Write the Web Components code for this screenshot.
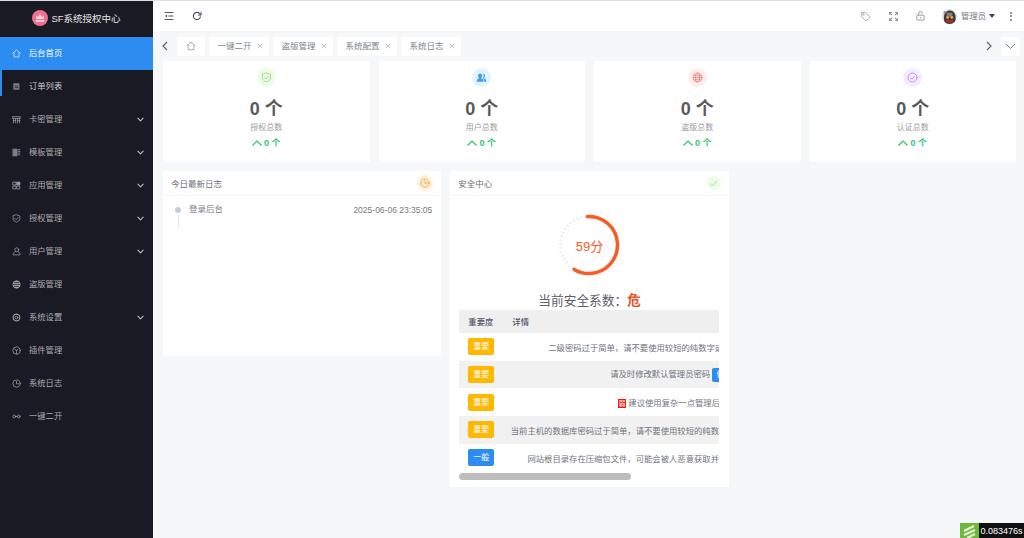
<!DOCTYPE html>
<html lang="zh"><head><meta charset="utf-8"><title>SF系统授权中心</title>
<style>
html,body{margin:0;height:100%;overflow:hidden}
body{font-family:"Liberation Sans","Noto Sans CJK SC",sans-serif;background:#f5f7f9;color:#515a6e}
</style></head><body>
<sf-app>
  <sf-sidebar slot="side">
    <sf-nav icon="home" active>后台首页</sf-nav>
    <sf-nav icon="order" marked>订单列表</sf-nav>
    <sf-nav icon="card" arrow>卡密管理</sf-nav>
    <sf-nav icon="tpl" arrow>模板管理</sf-nav>
    <sf-nav icon="apps" arrow>应用管理</sf-nav>
    <sf-nav icon="shield" arrow>授权管理</sf-nav>
    <sf-nav icon="user" arrow>用户管理</sf-nav>
    <sf-nav icon="globe">盗版管理</sf-nav>
    <sf-nav icon="gear" arrow>系统设置</sf-nav>
    <sf-nav icon="plug">插件管理</sf-nav>
    <sf-nav icon="clock">系统日志</sf-nav>
    <sf-nav icon="link">一键二开</sf-nav>
  </sf-sidebar>
  <sf-header slot="head"></sf-header>
  <sf-tabs slot="tabs">
    <sf-tab home></sf-tab>
    <sf-tab>一键二开</sf-tab>
    <sf-tab>盗版管理</sf-tab>
    <sf-tab>系统配置</sf-tab>
    <sf-tab>系统日志</sf-tab>
  </sf-tabs>
  <sf-stats slot="stats">
    <sf-stat icon="shield" color="#7ed05a" tint="#effbe8" label="授权总数"></sf-stat>
    <sf-stat icon="users" color="#3e9df5" tint="#e3f3fe" label="用户总数"></sf-stat>
    <sf-stat icon="web" color="#f4736f" tint="#feeeec" label="盗版总数"></sf-stat>
    <sf-stat icon="check" color="#a670ee" tint="#f4ebfe" label="认证总数"></sf-stat>
  </sf-stats>
  <sf-row slot="row">
    <sf-panel heading="今日最新日志" kind="clock" style="height:185px">
      <sf-log time="2025-06-06 23:35:05">登录后台</sf-log>
    </sf-panel>
    <sf-panel heading="安全中心" kind="ok" style="height:316px">
      <sf-gauge value="59"></sf-gauge>
      <sf-risk></sf-risk>
    </sf-panel>
  </sf-row>
  <sf-timer slot="timer">0.083476s</sf-timer>
</sf-app>
<script>
const I={
home:'<path d="M1.500 7.500 8 1.800l6.500 5.700M3.500 6.500V14h9V6.500"/>',
order:'<path d="M3.500 3h9v10h-9z" fill="currentColor" opacity=".75"/><path d="M5.500 7h5M5.500 10h5" stroke="#191a23"/>',
card:'<path d="M1.500 3h13v3h-13zM2.500 6v8M6.500 6v8M10 6v8M13.500 6v8M2.500 10h4M10 10h4"/>',
tpl:'<path d="M2 2h7v12H2z" fill="currentColor" opacity=".75"/><path d="M11 3h3M11 6h3M11 9h3M11 12h3"/>',
apps:'<path d="M2 2h5v5H2zM2 9h5v5H2zM9 9h5v5H9z"/><path d="M9 2h5v5H9z" fill="currentColor"/>',
shield:'<path d="M8 1.500 14 3.500v5c0 3-3 5-6 6-3-1-6-3-6-6v-5z"/><path d="m5 8 2.200 2.200L11 6.200"/>',
user:'<circle cx="8.500" cy="5" r="3.500"/><path d="M6 8 2 11.500V14h12v-2.500L11 8"/>',
globe:'<circle cx="8" cy="8" r="6.500" fill="currentColor"/><path d="M1.500 8h13M4 4.500h8M4 11.500h8" stroke="#191a23"/>',
gear:'<circle cx="8" cy="8" r="2.500"/><circle cx="8" cy="8" r="6" stroke-dasharray="3 1.500" stroke-width="2"/>',
plug:'<circle cx="8" cy="8" r="6.500"/><path d="M5 5.500 8 8l3-2.500M8 8v6"/>',
clock:'<circle cx="8" cy="8" r="6.500"/><path d="M8 4v4.500h3.500"/>',
link:'<circle cx="4" cy="8" r="2.500"/><circle cx="12" cy="8" r="2.500"/><path d="M6 8h4"/>',
users:'<path d="M1 14c0-3 2-4.500 3.500-5C3.500 8 3 6.800 3 5.500 3 3.500 4.200 2 6 2s3 1.500 3 3.500c0 1.300-.5 2.500-1.500 3.500 1.500.5 3.500 2 3.500 5z" fill="currentColor" stroke="none"/><path d="M10.500 2.200c1.500.2 2.500 1.600 2.500 3.300 0 1.300-.5 2.500-1.500 3.500 1.500.5 3.500 2 3.500 5h-3c0-2-1-3.500-2.200-4.600.9-1.100 1.200-2.500 1.200-3.900 0-1.200-.2-2.300-.5-3.300z" fill="currentColor" stroke="none"/>',
web:'<circle cx="8" cy="8" r="6.500"/><ellipse cx="8" cy="8" rx="3" ry="6.500"/><path d="M1.500 8h13M2.500 4.800h11M2.500 11.200h11"/>',
check:'<circle cx="8" cy="8" r="6.500"/><path d="m4.800 8 2.300 2.300 4.200-4.300"/>',
ok:'<path d="m2 8.500 4 4L14 4"/>'
};
const svg=(n,s,sw=1.300)=>`<svg width="${s}" height="${s}" viewBox="0 0 16 16" fill="none" stroke="currentColor" stroke-width="${sw}" stroke-linecap="round" stroke-linejoin="round" style="display:block">${I[n]}</svg>`;
function def(name,render){customElements.define(name,class extends HTMLElement{
  constructor(){super();this.attachShadow({mode:'open'})}
  connectedCallback(){this.shadowRoot.innerHTML=render(this)}
})}
const chevDown=(s,c='currentColor')=>`<svg width="${s}" height="${s}" viewBox="0 0 16 16" fill="none" stroke="${c}" stroke-width="2.600" stroke-linecap="round" stroke-linejoin="round" style="display:block"><path d="m2 5 6 6 6-6"/></svg>`;

def('sf-app',()=>`<style>
:host{display:grid;grid-template-columns:153px 1fr;grid-template-rows:30px 30px 1fr;height:538px;box-sizing:border-box;border-top:1px solid #dfe0e2;position:relative;overflow:hidden}
.s{display:block;grid-row:1/4}.c{display:flex;flex-direction:column;gap:9px;padding:0 8px 0 10px;min-width:0}
</style><div class="s"><slot name="side"></slot></div><slot name="head"></slot><slot name="tabs"></slot>
<div class="c"><slot name="stats"></slot><slot name="row"></slot></div><slot name="timer"></slot>`);

def('sf-sidebar',()=>`<style>
:host{display:flex;flex-direction:column;width:153px;height:537px;background:#191a23}
.logo{height:36px;display:flex;align-items:center;justify-content:center;gap:3px;color:#e6e6e8;font-size:9.500px;box-sizing:border-box;border-bottom:1px solid #10131c;padding-bottom:1px}
</style><div class="logo"><svg width="16" height="16" viewBox="0 0 16 16"><circle cx="8" cy="8" r="8" fill="#ee6f8f"/><path d="M8 3.500 10 7l2-1.500-.3 3.500H4.300L4 5.500 6 7z" fill="#fbd5de"/><path d="M3 10h10l-1.500 2h-7z" fill="#f9c5d2"/></svg><span>SF系统授权中心</span></div><slot></slot>`);

def('sf-nav',el=>{const a=el.hasAttribute('active'),m=el.hasAttribute('marked');return `<style>
:host{display:flex;align-items:center;height:33px;box-sizing:border-box;padding:0 9px 0 12px;font-size:8.300px;color:${a?'#fff':m?'#c9cacd':'#a9abb1'};background:${a?'#2d8cf0':'transparent'};position:relative}
.t{margin-left:8px;flex:1;position:relative;top:-1.500px}.i{color:${a?'#e6f1fd':'#a0a2a9'};position:relative;top:-.5px}
.mark{position:absolute;left:0;top:0;width:2px;height:26px;background:#2d8cf0}
</style>${m?'<span class="mark"></span>':''}<span class="i">${svg(el.getAttribute('icon'),9)}</span><span class="t"><slot></slot></span>${el.hasAttribute('arrow')?chevDown(7,'#b8bac0'):''}`});

def('sf-header',()=>`<style>
:host{display:flex;align-items:center;height:30px;background:#fff;padding:0 12px 0 11px;color:#55596a;font-size:8.300px}
.g{width:10px;color:#4d5160}.r{margin-left:18px}.mr{margin-left:auto;color:#9a9ea8}.x{margin-left:17px;color:#9a9ea8}
.who{display:flex;align-items:center;margin-left:17px;color:#75787f}
.who span{margin-left:4px;position:relative;top:-1px}
.caret{width:0;height:0;border:3.500px solid transparent;border-top:4px solid #3c4256;border-bottom:0;margin-left:3px}
.dots{margin-left:15px;display:flex;flex-direction:column;gap:1.500px}
.dots i{width:2px;height:2px;border-radius:50%;background:#6c707c;display:block}
</style>
<div class="g"><svg width="10" height="10" viewBox="0 0 16 16" fill="none" stroke="currentColor" stroke-width="1.600" style="display:block"><path d="M1 2.500h14M7 8h8M1 13.500h14"/><path d="M5 5.500 1.500 8 5 10.500z" fill="currentColor" stroke="none"/></svg></div>
<div class="g r"><svg width="10" height="10" viewBox="0 0 16 16" fill="none" stroke="currentColor" stroke-width="1.800" stroke-linecap="round" style="display:block"><path d="M13.500 9.500A5.800 5.800 0 1 1 12 3.800L14 6"/><path d="M14.500 1.800V6.500H10" stroke-width="1.500"/></svg></div>
<div class="g mr" style="color:#9a9ea8;width:11px"><svg width="11" height="11" viewBox="0 0 16 16" fill="none" stroke="currentColor" stroke-width="1.200" stroke-linejoin="round" style="display:block"><path d="M2 2h6l6.500 6.500-6 6L2 8z"/><circle cx="5" cy="5" r="1.200"/></svg></div>
<div class="g x" style="width:9px;margin-left:18px;color:#8b8f99"><svg width="9" height="9" viewBox="0 0 16 16" fill="none" stroke="currentColor" stroke-width="1.800" style="display:block"><path d="M1 5V1h4M15 5V1h-4M1 11v4h4M15 11v4h-4M1.500 1.500l4 4M14.500 1.500l-4 4M1.500 14.500l4-4M14.500 14.500l-4-4"/></svg></div>
<div class="g x" style="width:9px;margin-left:18px;color:#8b8f99"><svg width="9" height="10" viewBox="0 0 16 18" fill="none" stroke="currentColor" stroke-width="1.600" style="display:block"><rect x="1.500" y="7.500" width="13" height="9" rx="1"/><path d="M4.500 7.500V4.500a3.500 3.500 0 0 1 7 0"/><path d="M8 11v2.500"/></svg></div>
<div class="who"><svg width="15" height="15" viewBox="0 0 16 16"><defs><clipPath id="av"><circle cx="8" cy="8" r="8"/></clipPath></defs><g clip-path="url(#av)"><rect width="16" height="16" fill="#cfe4f2"/><path d="M2 10C2 4 5 1.500 8.500 1.500S15 5 14.500 10l-.5 6H3z" fill="#3b3a39"/><rect x="5" y="4" width="6" height="4" fill="#8a7f66"/><circle cx="6" cy="9" r="1.500" fill="#e8b04a"/><circle cx="10.500" cy="9" r="1.500" fill="#e8b04a"/><rect x="4" y="11.500" width="8" height="3" fill="#b32a22"/><circle cx="2.800" cy="3.500" r="1.500" fill="#d06aa0"/></g></svg><span>管理员</span><i class="caret"></i></div>
<div class="dots"><i></i><i></i><i></i></div>`);

def('sf-tabs',()=>`<style>
:host{display:flex;align-items:center;height:30px;padding:0 4px 0 0;box-sizing:border-box;color:#5f6470}
.a{width:24px;display:flex;justify-content:center;flex:none}.list{display:flex;gap:3.500px;flex:1;min-width:0}
.d{width:19px;height:19px;background:#fff;border-radius:2px;display:flex;align-items:center;justify-content:center;color:#7f8490;margin-left:1px}
.n{width:23px;display:flex;justify-content:center;margin-left:auto}
</style>
<div class="a"><svg width="8" height="10" viewBox="0 0 8 10" fill="none" stroke="currentColor" stroke-width="1.200"><path d="M6 1 2 5l4 4"/></svg></div>
<div class="list"><slot></slot></div>
<div class="n"><svg width="8" height="10" viewBox="0 0 8 10" fill="none" stroke="currentColor" stroke-width="1.200"><path d="m2 1 4 4-4 4"/></svg></div>
<div class="d"><svg width="11" height="7" viewBox="0 0 11 7" fill="none" stroke="currentColor" stroke-width="1"><path d="m1 1 4.500 4.500L10 1"/></svg></div>`);

def('sf-tab',el=>el.hasAttribute('home')?`<style>
:host{display:flex;width:28px;height:19px;background:#fff;border-radius:2px;align-items:center;justify-content:center;color:#7b7f88}
</style>${svg('home',10,1)}`:`<style>
:host{display:flex;align-items:center;height:19px;width:60.500px;box-sizing:border-box;padding-left:9px;background:#fff;border-radius:2px;color:#80848d;font-size:8.500px}
span{position:relative;top:-1px}svg{margin-left:5px}
</style><span><slot></slot></span><svg width="6" height="6" viewBox="0 0 6 6" stroke="#a9acb4" stroke-width=".8"><path d="m.8.8 4.400 4.400M5.200.8.800 5.200"/></svg>`);

def('sf-stats',()=>`<style>:host{display:grid;grid-template-columns:repeat(4,1fr);gap:9px}</style><slot></slot>`);
def('sf-stat',el=>`<style>
:host{display:flex;flex-direction:column;align-items:center;height:101px;box-sizing:border-box;padding-top:7px;background:#fff;border-radius:2px}
.c{width:19px;height:19px;border-radius:50%;background:${el.getAttribute('tint')};color:${el.getAttribute('color')};display:flex;align-items:center;justify-content:center}
.n{font-size:18px;font-weight:bold;color:#59595c;line-height:22px;margin-top:11px;white-space:nowrap}
.l{font-size:8px;color:#9a9ca3;line-height:12px;margin-top:2px}
.u{display:flex;align-items:center;gap:2px;color:#2fc56f;font-size:9px;font-weight:bold;line-height:12px;margin-top:3px}
</style><div class="c">${svg(el.getAttribute('icon'),11,1)}</div><div class="n">0 个</div><div class="l">${el.getAttribute('label')}</div>
<div class="u"><svg width="10" height="6" viewBox="0 0 10 6" fill="none" stroke="currentColor" stroke-width="1.200"><path d="m.5 5.500 4.500-4.500 4.500 4.500"/></svg><span>0 个</span></div>`);

def('sf-row',()=>`<style>:host{display:grid;grid-template-columns:repeat(3,1fr);gap:9px;align-items:start}</style><slot></slot>`);
def('sf-panel',el=>{const k=el.getAttribute('kind');
const badge=k==='clock'?`<span class="b" style="background:#fff1dd;box-shadow:0 0 3px #ffe3bd;color:#f8a63c">${svg('clock',10,1.500)}</span>`:`<span class="b" style="background:#effbe8;color:#7ed05a;margin-right:-1px">${svg('ok',9,1.200)}</span>`;
return `<style>
:host{display:block;box-sizing:border-box;background:#fff;border-radius:2px}
.h{display:flex;align-items:center;justify-content:space-between;height:25px;box-sizing:border-box;padding:0 9px 0 8px;border-bottom:1px solid #f6f6f7;font-size:8.500px;color:#6b6e75}
.b{width:14px;height:14px;border-radius:50%;display:flex;align-items:center;justify-content:center}
</style><div class="h"><span>${el.getAttribute('heading')}</span>${badge}</div><slot></slot>`});

def('sf-log',el=>`<style>
:host{display:flex;padding:10px 9px 0 12px;font-size:8.500px;color:#7b7e85;line-height:9px;justify-content:space-between}
.l{display:flex}.rail{width:6px;display:flex;flex-direction:column;align-items:center;margin-right:8px}
.dot{width:6px;height:6px;border-radius:50%;background:#c5cbdc;margin-top:1px}.line{width:1px;height:13px;background:#e8eaef;margin-top:2px}
.t{font-size:8.500px;color:#777a80}.x{position:relative;top:-1px}
</style><div class="l"><div class="rail"><i class="dot"></i><i class="line"></i></div><span class="x"><slot></slot></span></div><span class="t">${el.getAttribute('time')}</span>`);

def('sf-gauge',el=>{const v=+el.getAttribute('value');return `<style>
:host{display:flex;flex-direction:column;align-items:center;padding-top:18px}
.w{position:relative;width:62px;height:62px}
.v{position:absolute;left:0;right:0;top:0;bottom:0;display:flex;align-items:center;justify-content:center;color:#fb5a25;font-size:13px}
.s{font-size:12.700px;line-height:16px;color:#5d6067;margin-top:17px;white-space:nowrap}
b{color:#f6511d;font-weight:bold;font-size:13.500px}
</style><div class="w"><svg width="62" height="62" viewBox="0 0 62 62" fill="none" style="display:block;transform:rotate(-93deg)">
<circle cx="31" cy="31" r="28.500" stroke="#e2e2e2" stroke-width="3" stroke-dasharray="1 3"/>
<circle cx="31" cy="31" r="28.500" stroke="#fb5a25" stroke-width="3.500" stroke-linecap="round" pathLength="100" stroke-dasharray="${v+.5} 100"/>
</svg><div class="v">${v}分</div></div><div class="s">当前安全系数：<b>危</b></div>`});

def('sf-risk',()=>{
const rows=[
['重要','#ffb800','二级密码过于简单，请不要使用较短的纯数字或字母组合作为二级密码'],
['重要','#ffb800','请及时修改默认管理员密码 <i class="btn">修改</i>'],
['重要','#ffb800','<i class="weak">弱</i> 建议使用复杂一点管理后台地'],
['重要','#ffb800','当前主机的数据库密码过于简单，请不要使用较短的纯数字或字母组合作为数据库的连接码'],
['一般','#2d8cf0','网站根目录存在压缩包文件，可能会被人恶意获取并下载造成数据外泄风险请删除']];
return `<style>
:host{display:block;margin:1px 9px 0}
.v{overflow:hidden;width:260px}
.t{width:440px;font-size:8.330px;color:#70747c}
.r{display:flex;align-items:center;height:27.700px}
.r:nth-child(odd){background:#f1f1f2}.r.h{height:23px;background:#efeff0;color:#4f5565;font-weight:500}
.h span{position:relative;top:-1px}
.a{width:44px;flex:none;box-sizing:border-box;padding-left:9px}
.d{width:348px;flex:none;text-align:center;white-space:nowrap}
.h .d{text-align:left;padding-left:9px}
.tag{display:block;width:26px;height:17px;line-height:17px;text-align:center;border-radius:2px;color:#fff;font-size:8px;font-style:normal}
.btn{display:inline-block;font-style:normal;background:#2d8cf0;color:#fff;border-radius:2px;padding:0 4px;margin-right:8px;line-height:14px;font-size:8px}
.weak{display:inline-block;font-style:normal;background:#f01414;color:#fff;font-size:7px;line-height:9px;padding:0 0.500px;vertical-align:middle}
.bar{width:172px;height:7px;background:#bdbdbd;border-radius:4px;margin-top:2px}
</style><div class="v"><div class="t"><div class="r h"><span class="a">重要度</span><span class="d">详情</span></div>${rows.map(r=>`<div class="r"><span class="a"><i class="tag" style="background:${r[1]}">${r[0]}</i></span><span class="d">${r[2]}</span></div>`).join('')}</div></div><div class="bar"></div>`});

def('sf-timer',()=>`<style>
:host{position:absolute;right:0;bottom:0;display:flex;height:15px;align-items:stretch;font-size:9px;color:#fff}
.g{width:19px;background:#70b938}.x{background:#111;width:45px;display:flex;align-items:center;justify-content:center}
</style><div class="g"><svg width="19" height="15" viewBox="0 0 19 15" fill="none" stroke="#e9f5dc" stroke-width="2" style="display:block"><path d="M4 8 14 3M4 12 15 7M7 15l8-4"/></svg></div><div class="x"><slot></slot></div>`);
</script>
</body></html>
